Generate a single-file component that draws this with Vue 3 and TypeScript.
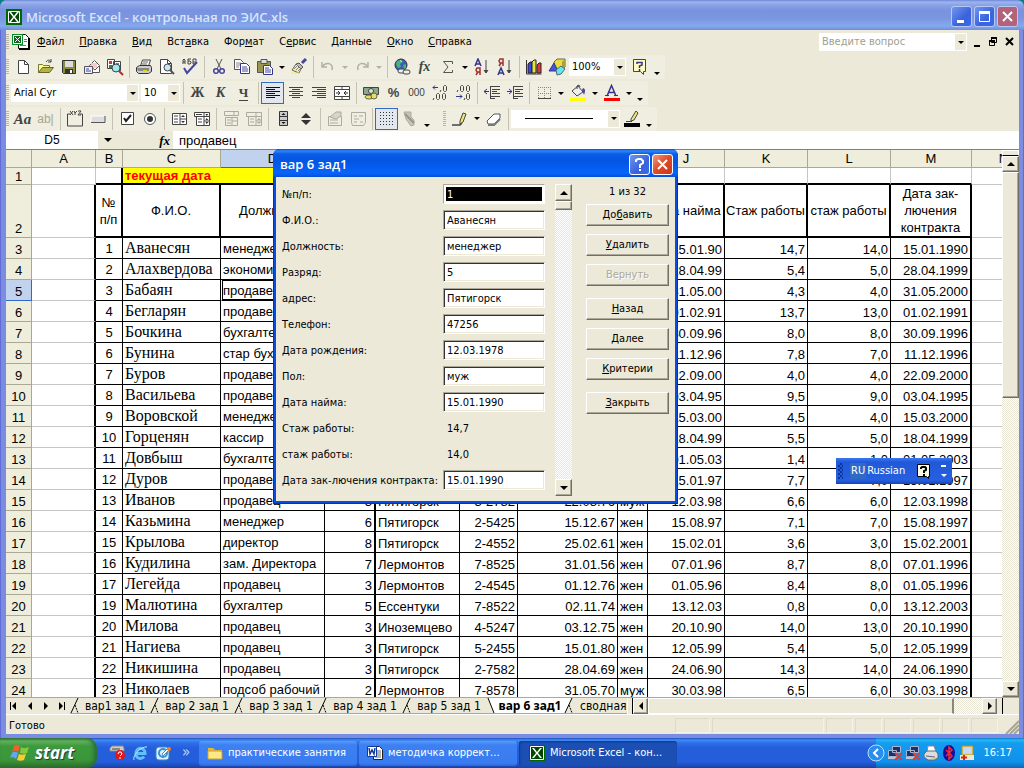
<script setup lang="ts">
import { ref } from 'vue'

type Item = { k: 'i' | 's' | 'a' | 'm'; icon?: string; label?: string; on?: boolean }

const icons: Record<string, string> = {
  new: '<path d="M4.500 2.500h6l4 4v9h-10z" fill="#fff" stroke="#444"/><path d="M10.500 2.500v4h4" fill="none" stroke="#444"/>',
  open: '<path d="M1.500 14.500v-8h4l1 1h6v3" fill="#ffff8c" stroke="#77773a"/><path d="M1.500 14.500l4-5h11l-4 5z" fill="#b5b24a" stroke="#66662c"/><path d="M9 4c2-3 4-2 5 0m0-3v3h-3" fill="none" stroke="#444"/>',
  save: '<path d="M2.500 2.500h13v13h-12l-1-1z" fill="#8c8c3c" stroke="#333"/><path d="M5 3h8v6H5z" fill="#ddd"/><path d="M5 11h8v4H5z" fill="#333"/><path d="M10 12h2v3h-2z" fill="#fff"/>',
  mail: '<path d="M6.500 7.500l5-5 5 5v7h-10z" fill="#fff" stroke="#555"/><path d="M8 5h6v5H8z" fill="#f9c8c8"/><path d="M7 8l5 4 4-4" fill="none" stroke="#555"/><path d="M1.500 8.500h8v7h-8z" fill="#eef" stroke="#555"/><path d="M3 11h3M3 13h5" stroke="#4646a0"/>',
  search: '<path d="M1.500 1.500h7v9h-7zM7.500 3.500h7v9h-7z" fill="#fff" stroke="#444"/><path d="M3 3h3v3H3z" fill="#d33"/><path d="M3 7h3v3H3z" fill="#338833"/><path d="M10 5h3v2h-3z" fill="#39c"/><circle cx="10" cy="10" r="4" fill="#9eeaf5" stroke="#444"/><path d="M13 13l4 4" stroke="#c22" stroke-width="2"/>',
  print: '<path d="M5.500 8l2-6h8l-2 6z" fill="#fff" stroke="#444"/><path d="M8 4h5M7 6h5" stroke="#666"/><path d="M1.500 9.500l3-2h11l1 2v4l-3 2h-10l-2-2z" fill="#ccc" stroke="#333"/><path d="M2 10h12v3H3z" fill="#888"/><path d="M8 13h4" stroke="#dd0" stroke-width="2"/>',
  preview: '<path d="M2.500 1.500h7l4 4v10h-11z" fill="#fff" stroke="#444"/><path d="M9.500 1.500v4h4" fill="none" stroke="#444"/><circle cx="9.500" cy="9.500" r="3.500" fill="#c4eaf5" stroke="#444"/><path d="M12 12l4 4" stroke="#555" stroke-width="2"/>',
  spell: '<path d="M2 6V2l1-1 1 1v4M2 4h2M7 1v5h2l1-1V4L9 3H7m3-2H7M12 1v5h3V4h-3m0-3h3v2" fill="none" stroke="#444"/><path d="M3 10l3 5 10-11" fill="none" stroke="#4646a0" stroke-width="2"/>',
  cut: '<path d="M6 1l5 10M12 1L7 11" stroke="#555" fill="none"/><circle cx="6" cy="13" r="2.300" fill="none" stroke="#4646a0" stroke-width="1.500"/><circle cx="12" cy="13" r="2.300" fill="none" stroke="#4646a0" stroke-width="1.500"/>',
  copy: '<path d="M1.500 1.500h6l3 3v7h-9z" fill="#fff" stroke="#555"/><path d="M3 5h5M3 7h5M3 9h3" stroke="#888"/><path d="M7.500 5.500h6l3 3v7h-9z" fill="#fff" stroke="#34348e"/><path d="M9 9h5M9 11h6M9 13h6" stroke="#4646a0"/>',
  paste: '<path d="M1.500 3.500h13v11h-13z" fill="#9a9650" stroke="#555"/><path d="M5 1.500h6v4H5z" fill="#ddd" stroke="#555"/><path d="M7.500 7.500h6l3 3v6h-9z" fill="#fff" stroke="#34348e"/><path d="M9 10h4M9 12h6M9 14h6" stroke="#4646a0"/>',
  brush: '<path d="M16 1l-4 4" stroke="#4646a0" stroke-width="3"/><path d="M9 5l4 4-2 2-5-5z" fill="#bbb" stroke="#555"/><path d="M6 6l5 5-2 4-7-3z" fill="#f0edb0" stroke="#666"/><path d="M4 11l4-4M6 12l3-3M8 13l2-2" stroke="#888"/><path d="M1 15h9" stroke="#f4ee30" stroke-dasharray="2 1"/>',
  undo: '<path d="M3 4v5h5M3 9c4-6 12-4 10 3" fill="none" stroke="#b4b1a0" stroke-width="1.500"/>',
  redo: '<path d="M15 4v5h-5M15 9c-4-6-12-4-10 3" fill="none" stroke="#b4b1a0" stroke-width="1.500"/>',
  globe: '<circle cx="8" cy="7" r="6" fill="#4157c8" stroke="#333"/><path d="M4 3l4-1 2 2-3 2 1 3-3 1-2-4zM10 7l3-1v4l-2 1z" fill="#46b867"/><path d="M7 2l2 1-1 1z" fill="#fff"/><rect x="5" y="11" width="7" height="4" rx="2" fill="#eee" stroke="#444"/><rect x="10" y="12" width="7" height="4" rx="2" fill="#eee" stroke="#444"/>',
  sum: '<path d="M13.500 6V3.500H4.500L9 9l-4.500 5.500h9V12" fill="none" stroke="#555"/>',
  az: '<path d="M2 8l3-7 3 7M3 6h4" stroke="#34348e" fill="none" stroke-width="1.500"/><path d="M7 17v-7H4l-1 2 1 2h3M5 14l-2 3" stroke="#a03030" fill="none" stroke-width="1.500"/><path d="M13 2v13M11 12l2 3 2-3" stroke="#444" fill="#444"/>',
  za: '<path d="M2 17l3-7 3 7M3 15h4" stroke="#34348e" fill="none" stroke-width="1.500"/><path d="M7 8V1H4L3 3l1 2h3M5 5L3 8" stroke="#a03030" fill="none" stroke-width="1.500"/><path d="M13 2v13M11 12l2 3 2-3" stroke="#444" fill="#444"/>',
  chart: '<path d="M1.500 2v14h15" fill="none" stroke="#333"/><path d="M3 6l2-2h2v11H3z" fill="#3a48e0" stroke="#222"/><path d="M7 4l2-2h2v13H7z" fill="#e8e23a" stroke="#222"/><path d="M12 7l2-2h2v10h-4z" fill="#d83a3a" stroke="#222"/>',
  draw: '<path d="M6 4l3-3h8v8l-3 3H6z" fill="#e9df3c" stroke="#666"/><path d="M14 4l3-3v8l-3 3z" fill="#a8a040"/><path d="M1 13l5-8 4 8z" fill="#4157d8" stroke="#34348e"/><path d="M8 12l5-4 4 3-4 5-4 1z" fill="#61e9ee" stroke="#567"/>',
  help: '<path d="M2.500 1.500h12v12h-2v3l-3-3h-7z" fill="#fffcc0" stroke="#444"/><path d="M6 6V4.500h5V7L8.500 8v2M8.500 11v2" stroke="#34348e" stroke-width="1.500" fill="none"/>',
  left: '<path d="M2 3.500h14M2 5.500h9M2 7.500h14M2 9.500h9M2 11.500h14M2 13.500h9" stroke="#111"/>',
  center: '<path d="M2 3.500h14M5 5.500h8M2 7.500h14M5 9.500h8M2 11.500h14M5 13.500h8" stroke="#444"/>',
  right: '<path d="M2 3.500h14M7 5.500h9M2 7.500h14M7 9.500h9M2 11.500h14M7 13.500h9" stroke="#444"/>',
  merge: '<path d="M1.500 2.500h15v13h-15zM1.500 5.500h15M1.500 12.500h15M9 2v3M9 12v4" fill="#fff" stroke="#444"/><path d="M3 9h3M15 9h-3M5 7l2 2-2 2M13 7l-2 2 2 2" stroke="#333" fill="none"/>',
  money: '<path d="M1.500 3.500h15v7h-15z" fill="#88a888" stroke="#444"/><circle cx="9" cy="7" r="2.500" fill="#d8e8d8" stroke="#444"/><ellipse cx="7" cy="13" rx="4" ry="2" fill="#e8de58" stroke="#665"/><ellipse cx="12" cy="12" rx="3" ry="3" fill="#e8de58" stroke="#665"/>',
  inc: '<path d="M7 3.500H2M4 1.500l-2 2 2 2" stroke="#34348e" fill="none"/><path d="M10 6l-1 2M12.500 2.500l1-1h1l1 1v4l-1 1h-1l-1-1zM3 14l-1 2M5.500 10.500l1-1h1l1 1v4l-1 1h-1l-1-1zM11.500 10.500l1-1h1l1 1v4l-1 1h-1l-1-1z" fill="none" stroke="#444"/>',
  dec: '<path d="M2 12.500h6M6 10.500l2 2-2 2" stroke="#34348e" fill="none"/><path d="M4 6L3 8M6.500 2.500l1-1h1l1 1v4l-1 1h-1l-1-1zM12.500 2.500l1-1h1l1 1v4l-1 1h-1l-1-1zM11 14l-1 2M12.500 10.500l1-1h1l1 1v4l-1 1h-1l-1-1z" fill="none" stroke="#444"/>',
  outdent: '<path d="M7 2.500h10M9 5.500h8M9 7.500h5M9 9.500h8M7 12.500h10M7 14.500h5M7.500 2v13" stroke="#444"/><path d="M6 7.500H1M4 5l-3 2.500L4 10" stroke="#34348e" fill="none"/>',
  indent: '<path d="M7 2.500h10M9 5.500h8M9 7.500h5M9 9.500h8M7 12.500h10M7 14.500h5M7.500 2v13" stroke="#444"/><path d="M1 7.500h5M3 5l3 2.500L3 10" stroke="#34348e" fill="none"/>',
  border: '<path d="M3.500 3v11M9.500 3v11M15.500 3v11M3 3.500h12M3 9.500h12" stroke="#888" stroke-dasharray="1 1"/><path d="M3 14.500h13" stroke="#444"/>',
  fill: '<path d="M3 7l6-5 5 6-6 4z" fill="#eee" stroke="#444"/><path d="M8 5V2l2-1 1 2" fill="none" stroke="#444"/><path d="M14 4c3 1 2 4 1 7l-2-5z" fill="#4646a0"/><path d="M1 14h16v3H1z" fill="#ff0"/>',
  color: '<path d="M4 12L8.500 1.500 13 12M6 8.500h6" stroke="#34348e" fill="none" stroke-width="1.500"/><path d="M2 11.500h4M11 11.500h4" stroke="#34348e"/><path d="M1 14h16v3H1z" fill="#f00"/>',
  group: '<path d="M4 4H1.500v12h15V4H14" fill="none" stroke="#444"/><path d="M4 1l3 4M7 1L4 5M8 1l1 2 2-2M9 3v2M12 1h3l-3 4h3" fill="none" stroke="#444"/>',
  button: '<path d="M2 6h14v6H2z" fill="#ddd"/><path d="M2 12.500h14V6" fill="none" stroke="#555"/><path d="M2 12V6h13" fill="none" stroke="#fff"/>',
  check: '<path d="M3.500 2.500h12v12h-12z" fill="#fff" stroke="#444"/><path d="M6 8l2 3 5-6" fill="none" stroke="#222" stroke-width="2"/>',
  radio: '<circle cx="9" cy="9" r="5.500" fill="#fff" stroke="#555"/><circle cx="9" cy="9" r="3" fill="#333"/>',
  list: '<path d="M2.500 3.500h14v11h-14zM10 4v11M10 9h6" fill="#fff" stroke="#444"/><path d="M4 6h4M4 9h4M4 12h4" stroke="#444"/><path d="M13 5l-2 2h4zM13 13l-2-2h4z" fill="#333"/>',
  combo: '<path d="M1.500 2.500h15v4h-15zM3.500 6.500h13v9h-13zM11 3v12M11 11h5" fill="#fff" stroke="#444"/><path d="M5 9h4M5 12h4M3 4.500h6" stroke="#444"/><path d="M13.500 6l-1-2h3zM13.500 8l-1 2h3zM13.500 14l-1-2h3z" fill="#333"/>',
  dlist: '<path d="M2.500 1.500h14v4h-14zM3.500 7.500h12v8h-12zM10 8v7M10 11h5M12 2v3" fill="none" stroke="#aeab9b"/><path d="M5 10h4M5 13h4" stroke="#aeab9b"/>',
  dcombo: '<path d="M1.500 2.500h15v4h-15zM3.500 6.500h13v9h-13zM11 3v12M11 11h5" fill="none" stroke="#aeab9b"/><path d="M5 9h4M5 12h4" stroke="#aeab9b"/><path d="M14 8l-2 2h4zM14 14l-2-2h4z" fill="#aeab9b"/>',
  scroll: '<path d="M5.500 1.500h8v5h-8zM5.500 6.500h8v4h-8zM5.500 10.500h8v5h-8z" fill="#ccc" stroke="#333"/><path d="M9.500 3l-2 2h4zM9.500 14l-2-2h4z" fill="#111"/>',
  spin: '<path d="M9 3l5 5H4zM9 15l5-5H4z" fill="#333"/>',
  props: '<path d="M2.500 6.500h13v9h-13zM4 10h8M4 13h8" fill="none" stroke="#aeab9b"/><path d="M4 7l6-5h5v4l-5 3z" fill="#d8d5c4" stroke="#aeab9b"/>',
  code: '<path d="M2.500 2.500h14v10l-2 3h-11l-1-3zM5 6h3M10 6h4M5 9h5M5 12h3M11 12h3" fill="none" stroke="#aeab9b"/>',
  grid: '<path d="M2 2.500h15M2 5.500h15M2 8.500h15M2 11.500h15M2 14.500h15" stroke="#333" stroke-dasharray="1 2"/>',
  run: '<path d="M3 2h7v5l3 3v5l-3 1-5-7z" fill="#c8c5b4" stroke="#aeab9b"/><path d="M4 4l9 9" stroke="#999685" stroke-width="2"/>',
  pen: '<path d="M1 15h8l2-2" fill="none" stroke="#444" stroke-width="1.500"/><path d="M9 11l3-8 3 1-3 8-3 2z" fill="#eee87c" stroke="#444"/>',
  eraser: '<path d="M2 11l7-7h6v4l-6 6H3z" fill="#fff" stroke="#555"/><path d="M3 15h6l6-6" fill="none" stroke="#777" stroke-width="2"/>',
  pencolor: '<path d="M3 11.500h6" stroke="#444"/><path d="M8 9l5-8 2 2-4 7-3 1z" fill="#eee87c" stroke="#444"/><path d="M1 13h16v4H1z" fill="#000"/>',
}
const glyph: Record<string, { t: string; c: string }> = {
  fx: { t: 'fx', c: 'g-fx' },
  bold: { t: 'Ж', c: 'g-b' },
  italic: { t: 'К', c: 'g-i' },
  under: { t: 'Ч', c: 'g-u' },
  percent: { t: '%', c: 'g-p' },
  zeros: { t: '000', c: 'g-z' },
  label: { t: 'Aa', c: 'g-l' },
  edit: { t: 'ab|', c: 'g-e' },
}
// Compact notation: "|" separator, "v" drop arrow, "^" overflow arrow, "*" prefix marks a pressed button
const bar = (spec: string): Item[] =>
  spec.split(' ').map((w) =>
    w === '|' ? { k: 's' } : w === 'v' ? { k: 'a' } : w === '^' ? { k: 'm' } : { k: 'i', icon: w.replace('*', ''), on: w[0] === '*' },
  )
const groups = [
  [bar('new open save mail search | print preview spell | cut copy paste v brush | undo v redo v | globe fx sum v az za | chart draw'), bar('help ^')],
  [bar('| bold italic under | *left center right merge | money percent zeros inc dec | outdent indent | border v fill v color v ^')],
  [bar('label edit | group button | check radio | list combo | dlist dcombo | scroll spin | props code | *grid run ^'), bar('pen v eraser |'), bar('pencolor ^')],
]
type Seg = { kind: 'items'; items: Item[] } | { kind: 'combo'; cls: string; label: string; value: string } | { kind: 'grip' }
const bars: Seg[][] = [
  [{ kind: 'items', items: groups[0][0] }, { kind: 'combo', cls: 'c-zoom', label: 'Масштаб', value: '100%' }, { kind: 'items', items: groups[0][1] }],
  [{ kind: 'combo', cls: 'c-font', label: 'Шрифт', value: 'Arial Cyr' }, { kind: 'combo', cls: 'c-size', label: 'Размер', value: '10' }, { kind: 'items', items: groups[1][0] }],
  [{ kind: 'items', items: groups[2][0] }, { kind: 'grip' }, { kind: 'items', items: groups[2][1] }, { kind: 'combo', cls: 'c-line', label: 'Вид линии', value: '' }, { kind: 'items', items: groups[2][2] }],
]
const menu = [['', 'Ф', 'айл'], ['', 'П', 'равка'], ['', 'В', 'ид'], ['Вст', 'а', 'вка'], ['Фор', 'м', 'ат'], ['С', 'е', 'рвис'], ['', 'Д', 'анные'], ['', 'О', 'кно'], ['', 'С', 'правка']]

const cols = 'ABCDEFGHIJKLMN'.split('')
const raw = `1;Аванесян;менеджер;;;;;;15.01.90;14,7;14,0;15.01.1990
2;Алахвердова;экономист;;;;;;28.04.99;5,4;5,0;28.04.1999
3;Бабаян;продавец;;;;;;31.05.00;4,3;4,0;31.05.2000
4;Бегларян;продавец;;;;;;01.02.91;13,7;13,0;01.02.1991
5;Бочкина;бухгалтер;;;;;;30.09.96;8,0;8,0;30.09.1996
6;Бунина;стар бухгалтер;;;;;;11.12.96;7,8;7,0;11.12.1996
7;Буров;продавец;;;;;;22.09.00;4,0;4,0;22.09.2000
8;Васильева;продавец;;;;;;03.04.95;9,5;9,0;03.04.1995
9;Воровской;менеджер;;;;;;15.03.00;4,5;4,0;15.03.2000
10;Горценян;кассир;;;;;;18.04.99;5,5;5,0;18.04.1999
11;Довбыш;бухгалтер;;;;;;01.05.03;1,4;1,0;01.05.2003
12;Дуров;продавец;;;;;;15.01.97;7,7;7,0;15.01.1997
13;Иванов;продавец;3;Пятигорск;3-2782;22.08.76;муж;12.03.98;6,6;6,0;12.03.1998
14;Казьмина;менеджер;6;Пятигорск;2-5425;15.12.67;жен;15.08.97;7,1;7,0;15.08.1997
15;Крылова;директор;8;Пятигорск;2-4552;25.02.61;жен;15.02.01;3,6;3,0;15.02.2001
16;Кудилина;зам. Директора;7;Лермонтов;7-8525;31.01.56;жен;07.01.96;8,7;8,0;07.01.1996
17;Легейда;продавец;3;Лермонтов;2-4545;01.12.76;жен;01.05.96;8,4;8,0;01.05.1996
19;Малютина;бухгалтер;5;Ессентуки;7-8522;02.11.74;жен;13.12.03;0,8;0,0;13.12.2003
20;Милова;продавец;3;Иноземцево;4-5247;03.12.75;жен;20.10.90;14,0;13,0;20.10.1990
21;Нагиева;продавец;3;Пятигорск;5-2455;15.01.80;жен;12.05.99;5,4;5,0;12.05.1999
22;Никишина;продавец;3;Пятигорск;2-7582;28.04.69;жен;24.06.90;14,3;14,0;24.06.1990
23;Николаев;подсоб рабочий;2;Лермонтов;7-8578;31.05.70;муж;30.03.98;6,5;6,0;30.03.1998`
const rows = raw.split('\n').map((l) => l.split(';'))
const heads = ['№ п/п', 'Ф.И.О.', 'Должность', '', '', '', '', '', 'Дата найма', 'Стаж работы', 'стаж работы', 'Дата зак-лючения контракта']

const fields = ref([
  { l: '№п/п:', v: '1', ro: false },
  { l: 'Ф.И.О.:', v: 'Аванесян', ro: false },
  { l: 'Должность:', v: 'менеджер', ro: false },
  { l: 'Разряд:', v: '5', ro: false },
  { l: 'адрес:', v: 'Пятигорск', ro: false },
  { l: 'Телефон:', v: '47256', ro: false },
  { l: 'Дата рождения:', v: '12.03.1978', ro: false },
  { l: 'Пол:', v: 'муж', ro: false },
  { l: 'Дата найма:', v: '15.01.1990', ro: false },
  { l: 'Стаж работы:', v: '14,7', ro: true },
  { l: 'стаж работы:', v: '14,0', ro: true },
  { l: 'Дата зак-лючения контракта:', v: '15.01.1990', ro: false },
])
const dlgButtons = [
  [['До', 'б', 'авить'], ['', 'У', 'далить'], ['Вернуть', '', '']],
  [['', 'Н', 'азад'], ['', 'Д', 'алее'], ['', 'К', 'ритерии']],
  [['', 'З', 'акрыть']],
]
const tabs = ['вар1 зад 1', 'вар 2 зад 1', 'вар 3 зад 1', 'вар 4 зад 1', 'вар 5 зад 1', 'вар 6 зад1', 'сводная']
const formula = ref('продавец')
const question = ref('')
</script>

<template>
  <div class="desktop">
    <main class="window">
      <header class="titlebar">
        <svg class="xl" viewBox="0 0 16 16"><path d="M0 0h16v16H0z" fill="#006800" /><path d="M2.500 2.500h11v11h-11z" fill="#004800" stroke="#fff" /><path d="M3 3h2l3 4 3-4h2L9 8l4 5h-2L8 9l-3 4H3l4-5z" fill="#fff" /></svg>
        <h1>Microsoft Excel - контрольная по ЭИС.xls</h1>
        <button class="wb" aria-label="Свернуть"><svg viewBox="0 0 19 19"><path d="M5 13h7v3H5z" fill="#fff" /></svg></button>
        <button class="wb" aria-label="Развернуть"><svg viewBox="0 0 19 19"><path d="M4.500 5.500h10v9h-10z" fill="none" stroke="#fff" /><path d="M4 4h11v3H4z" fill="#fff" /></svg></button>
        <button class="wb red" aria-label="Закрыть окно"><svg viewBox="0 0 19 19"><path d="M5 5l9 9M14 5l-9 9" stroke="#fff" stroke-width="2" /></svg></button>
      </header>

      <nav class="menubar">
        <i class="grip"></i>
        <svg class="docicon" viewBox="0 0 18 18"><path d="M6.500 1.500h7l3 3v11h-10z" fill="#fff" stroke="#111" /><path d="M17 5v11H7" fill="none" stroke="#000" stroke-width="2" /><path d="M8 12.500h6M12 6.500h3M12 8.500h3" stroke="#777" /><path d="M0 1h11v11H0z" fill="#0a8a2a" /><path d="M1.500 2.500h8v8h-8z" fill="#0a6a1a" stroke="#fff" /><path d="M3 4l5 5M8 4L3 9" stroke="#fff" /></svg>
        <button v-for="m in menu" :key="m.join('')" class="mi">{{ m[0] }}<u>{{ m[1] }}</u>{{ m[2] }}</button>
        <span class="fill"></span>
        <label class="ask"><input v-model="question" aria-label="Введите вопрос" placeholder="Введите вопрос" /><i class="tri"></i></label>
        <button class="mdi" aria-label="Свернуть книгу"><svg viewBox="0 0 12 12"><path d="M3 9h6v2H3z" /></svg></button>
        <button class="mdi" aria-label="Восстановить книгу"><svg viewBox="0 0 12 12"><path d="M4.500 2.500h5v4h-5zM2.500 5.500h5v4h-5z" fill="#ece9d8" stroke="#000" /><path d="M4 1h6v2H4zM2 4h6v2H2z" /></svg></button>
        <button class="mdi" aria-label="Закрыть книгу"><svg viewBox="0 0 12 12"><path d="M3 2l7 7M10 2L3 9" stroke="#000" stroke-width="2" /></svg></button>
      </nav>

      <div v-for="(segs, r) in bars" :key="r" class="toolrow">
        <div class="toolbar">
          <i class="grip"></i>
          <template v-for="(s, n) in segs" :key="n">
            <i v-if="s.kind === 'grip'" class="grip second"></i>
            <label v-else-if="s.kind === 'combo'" class="combo" :class="s.cls">
              <select :aria-label="s.label"><option>{{ s.value }}</option></select>
              <i v-if="s.cls === 'c-line'" class="line"></i>
              <i class="tri"></i>
            </label>
            <template v-else>
              <template v-for="(t, i) in s.items" :key="i">
                <i v-if="t.k === 's'" class="sep"></i>
                <button v-else-if="t.k === 'a' || t.k === 'm'" class="drop" :class="{ more: t.k === 'm', dim: r === 0 && (i === 17 || i === 19) }" aria-label="Параметры"><i></i></button>
                <button v-else class="tb" :class="{ on: t.on }" :aria-label="t.icon">
                  <span v-if="glyph[t.icon!]" :class="glyph[t.icon!].c">{{ glyph[t.icon!].t }}</span>
                  <svg v-else viewBox="0 0 18 18" v-html="icons[t.icon!]"></svg>
                </button>
              </template>
            </template>
          </template>
        </div>
      </div>

      <div class="formula">
        <div class="namebox">D5</div>
        <button class="nbdrop" aria-label="Имена"><i></i></button>
        <button class="fxb" aria-label="Вставка функции">fx</button>
        <input v-model="formula" aria-label="Строка формул" />
      </div>

      <section class="sheet">
        <div class="cells">
          <table>
            <colgroup><col class="w-h" /><col v-for="c in cols" :key="c" :class="'w-' + c" /></colgroup>
            <thead>
              <tr class="letters"><th></th><th v-for="c in cols" :key="c" scope="col" :class="{ sel: c === 'D' }">{{ c }}</th></tr>
            </thead>
            <tbody>
              <tr class="r1">
                <th scope="row">1</th><td class="plain"></td><td class="kb"></td>
                <td class="yel">текущая дата</td><td class="yel"></td><td class="yel"></td>
                <td v-for="n in 7" :key="n" class="ub"></td><td class="ub"></td><td class="plain"></td>
              </tr>
              <tr class="r2">
                <th scope="row">2</th><td class="plain edge"></td>
                <td v-for="(h, n) in heads" :key="n" class="hd">{{ h }}</td><td class="plain"></td>
              </tr>
              <tr v-for="(row, i) in rows" :key="i" class="data">
                <th scope="row" :class="{ sel: i === 2 }">{{ i + 3 }}</th><td class="plain edge"></td>
                <td v-for="(v, j) in row" :key="j" :class="['k' + j, { active: i === 2 && j === 2 }]">{{ v }}</td><td class="plain"></td>
              </tr>
            </tbody>
          </table>
        </div>
        <div class="vscroll">
          <i class="split"></i>
          <button class="sb" aria-label="Вверх"><i class="up"></i></button>
          <i class="thumb"></i>
          <i class="fill"></i>
          <button class="sb" aria-label="Вниз"><i class="down"></i></button>
        </div>
      </section>

      <div class="tabrow">
        <button class="nav" aria-label="Первый лист"><svg viewBox="0 0 16 16"><path d="M4 4h1v8H4zM10 4v8L6 8z" /></svg></button>
        <button class="nav" aria-label="Предыдущий лист"><svg viewBox="0 0 16 16"><path d="M10 4v8L6 8z" /></svg></button>
        <button class="nav" aria-label="Следующий лист"><svg viewBox="0 0 16 16"><path d="M6 4v8l4-4z" /></svg></button>
        <button class="nav" aria-label="Последний лист"><svg viewBox="0 0 16 16"><path d="M5 4v8l4-4zM10 4h1v8h-1z" /></svg></button>
        <div class="tabs">
          <template v-for="(t, i) in tabs" :key="t">
            <svg class="slant" viewBox="0 0 10 17">
              <path v-if="i === 5" d="M2 0h8v17H8z" fill="#fff" /><path v-if="i === 6" d="M0 0h8L1 16H0z" fill="#fff" />
              <path v-if="i !== 5" d="M8 0L1 15" stroke="#000" fill="none" />
              <path :d="i === 5 ? 'M2 0l6 15' : 'M5 7l3 8'" stroke="#000" :stroke-dasharray="i === 5 ? 'none' : '2 1'" fill="none" />
            </svg>
            <button class="tab" :class="{ cur: i === 5, first: i === 0, last: i === 6 }">{{ t }}</button>
          </template>
        </div>
        <i class="tsplit"></i>
        <button class="sb" aria-label="Влево"><i class="lf"></i></button>
        <i class="hthumb"></i><i class="htrack"></i>
        <button class="sb" aria-label="Вправо"><i class="rt"></i></button>
        <i class="hend"></i>
      </div>

      <footer class="status">
        <span class="ready">Готово</span>
        <i class="p1"></i><i class="p2"></i><i v-for="n in 6" :key="n" class="p3"></i>
        <svg viewBox="0 0 14 14"><path d="M1 14L14 1M5 14l9-9M9 14l5-5" stroke="#a8a595" stroke-width="2" /></svg>
      </footer>
    </main>

    <section class="dialog" role="dialog" aria-label="вар 6 зад1">
      <header>
        <h2>вар 6 зад1</h2>
        <button class="wb" aria-label="Справка"><svg viewBox="0 0 19 19"><path d="M6 7V5l2-1h3l2 2v2l-3 2v3M10 14v2" fill="none" stroke="#fff" stroke-width="2" /></svg></button>
        <button class="wb red" aria-label="Закрыть форму"><svg viewBox="0 0 19 19"><path d="M5 5l9 9M14 5l-9 9" stroke="#fff" stroke-width="2" /></svg></button>
      </header>
      <div class="dbody">
        <div class="form">
          <template v-for="(f, i) in fields" :key="f.l">
            <label :for="'f' + i">{{ f.l }}</label>
            <output v-if="f.ro" :id="'f' + i">{{ f.v }}</output>
            <input v-else :id="'f' + i" v-model="f.v" :class="{ marked: i === 0 }" />
          </template>
        </div>
        <div class="dscroll">
          <button class="sb" aria-label="Предыдущая запись"><i class="up"></i></button>
          <i class="thumb"></i><i class="fill"></i>
          <button class="sb" aria-label="Следующая запись"><i class="down"></i></button>
        </div>
        <div class="acts">
          <p>1 из 32</p>
          <div v-for="(g, i) in dlgButtons" :key="i" class="grp">
            <button v-for="b in g" :key="b.join('')" :disabled="!b[1]">{{ b[0] }}<u>{{ b[1] }}</u>{{ b[2] }}</button>
          </div>
        </div>
      </div>
    </section>

    <aside class="lang">
      <i class="lgrip"></i><span class="ru">RU</span><span>Russian</span>
      <button aria-label="Справка по языку"><svg viewBox="0 0 15 16"><path d="M1.500 1.500h12v12h-1v2l-2-2h-9z" fill="#fffde0" stroke="#000" /><path d="M5 6V5l1-1h3l1 1v2L8 8v2M8 11v2" fill="none" stroke="#000" stroke-width="2" /></svg></button>
      <span class="lend"><i></i><i class="t"></i></span>
    </aside>

    <footer class="taskbar">
      <button class="start">
        <svg viewBox="0 0 20 18"><path d="M4 2c2-2 4-1 6 0L8 8C6 7 4 6 2 8z" fill="#f0602a" /><path d="M11 3c3 2 5 1 8 0l-2 6c-2 1-4 1-7 0z" fill="#84c83c" /><path d="M2 9c2-2 4-1 6 0l-2 6c-2-2-4-2-6-1z" fill="#6aa2f8" /><path d="M9 10c2 1 4 1 7 0l-2 6c-2 1-5 1-7 0z" fill="#f8cc38" /></svg>
        <span>start</span>
      </button>
      <div class="quick">
        <button aria-label="Диск"><svg viewBox="0 0 16 16"><path d="M1 3l2-2h11l1 2v3H1z" fill="#ccc" stroke="#888" /><path d="M3 4h8" stroke="#444" /><circle cx="11" cy="10" r="5" fill="#e01818" /><path d="M9 9l1-2h2l1 2-2 2M11 12v2" stroke="#fff" fill="none" stroke-width="1" /></svg></button>
        <button aria-label="Internet Explorer"><svg viewBox="0 0 16 16"><path d="M4 8.500h9c0-7-9-7-9 0 0 6 6 6 8 3" fill="none" stroke="#5fc0fa" stroke-width="3" /><path d="M2 15C0 11 9 1 15 2" fill="none" stroke="#b8e4ff" /></svg></button>
        <button aria-label="Outlook Express"><svg viewBox="0 0 16 16"><rect x="1" y="2" width="13" height="13" rx="3" fill="#dff0fa" stroke="#3a86c0" /><circle cx="8" cy="8" r="4" fill="none" stroke="#3393d8" stroke-width="2" /><path d="M7 9l7-7 1 2-7 7z" fill="#fff" stroke="#58a" /><circle cx="14" cy="4" r="2" fill="#f08028" /></svg></button>
        <button class="chev" aria-label="Ещё">»</button>
      </div>
      <button class="task"><svg viewBox="0 0 16 16"><path d="M1 3h5l2 2h7v9H1z" fill="#e4b83c" /><path d="M1 14V6h12l2 1v7z" fill="#fbe888" stroke="#d0a030" /></svg><span>практические занятия</span></button>
      <button class="task"><svg viewBox="0 0 16 16"><path d="M6.500 1.500h6l3 3v10h-9z" fill="#fff" stroke="#222" /><path d="M8 6h6M8 8h6M8 10h6M8 12h6" stroke="#666" /><path d="M.500 1.500h9v10h-9z" fill="#fff" stroke="#123a9c" /><path d="M2 3l1 6 2-4 2 4 1-6" fill="none" stroke="#123a9c" stroke-width="1.500" /></svg><span>методичка коррект...</span></button>
      <button class="task cur"><svg viewBox="0 0 16 16"><path d="M0 0h16v16H0z" fill="#006800" /><path d="M1.500 1.500h13v13h-13z" fill="#004800" stroke="#fff" /><path d="M3 3h2l3 4 3-4h2L9 8l4 5h-2L8 9l-3 4H3l4-5z" fill="#fff" /></svg><span>Microsoft Excel - кон...</span></button>
      <span class="fill"></span>
      <div class="tray">
        <button class="hide" aria-label="Скрыть значки"><svg viewBox="0 0 18 18"><circle cx="9" cy="9" r="8" fill="#2a8ef0" stroke="#b8e0ff" /><path d="M11 5L7 9l4 4" stroke="#fff" stroke-width="2" fill="none" /></svg></button>
        <svg v-for="n in 2" :key="n" viewBox="0 0 16 16"><path d="M5.500 1.500h8v6h-8zM1.500 5.500h8v6h-8z" fill="#1c3070" stroke="#a8b4cc" /><path d="M1 12h9v2H1z" fill="#c0c4d0" /><path d="M8 8l7 7M15 8l-7 7" stroke="#f03428" stroke-width="2" /></svg>
        <svg viewBox="0 0 16 16"><path d="M4 7l1-6h6l2 6z" fill="#fff" stroke="#889" /><path d="M1 9l3-3h9l2 3v4l-4 2H5l-4-3z" fill="#ddd" stroke="#667" /><path d="M3 11l9 1" stroke="#667" /><path d="M8 14h4" stroke="#c8c838" /></svg>
        <svg viewBox="0 0 16 16"><ellipse cx="8" cy="8" rx="6" ry="8" fill="#1010a0" /><path d="M5 5l6 6-3 3V2l3 3-6 6" fill="none" stroke="#ff2828" stroke-width="1.500" /></svg>
        <svg viewBox="0 0 16 16"><path d="M3 1h11v9H3z" fill="#f0d860" stroke="#a89030" /><path d="M5 3h7v5H5z" fill="#c8d8f8" /><path d="M1 10h14v5H1z" fill="#f0e8c8" /><path d="M2 12.500h6M5 10v5" stroke="#e02020" stroke-width="2" /></svg>
        <time>16:17</time>
      </div>
    </footer>
  </div>
</template>

<style>
html, body { margin: 0; height: 100%; background: #008080; }
#app { height: 100%; }
</style>

<style scoped>
* { box-sizing: border-box; }
.desktop {
  --ui: Tahoma, "DejaVu Sans Condensed", "Noto Sans", sans-serif;
  position: relative; display: flex; flex-direction: column; height: 100vh; overflow: hidden;
  font: 11px/14px var(--ui); color: #000;
}
button, input, select { font: inherit; color: inherit; margin: 0; padding: 0; border: 0; background: none; border-radius: 0; outline: 0; }
i { display: block; font-style: normal; flex: none; }
svg { display: block; flex: none; }
button { display: flex; align-items: center; justify-content: center; flex: none; }
.fill { flex: 1; }
.window { flex: 1; min-height: 0; display: flex; flex-direction: column; padding: 0 5px 4px 6px; background: #7a8de0; border-radius: 7px 7px 0 0; box-shadow: inset 1px 0 #5f6cd6, inset -1px 0 #5f6cd6; overflow: hidden; }

.titlebar { height: 30px; margin: 0 -5px 0 -6px; padding: 3px 6px 0 6px; display: flex; align-items: center; gap: 2px; background: linear-gradient(#6f86d9 0, #9db5ee 2px, #8aa3e6 5px, #7a93df 10px, #7a95e1 18px, #84a9ec 26px, #6f8ddc 30px); }
.xl { width: 16px; height: 16px; }
h1, h2 { margin: 0; flex: 1; font: 600 13px/16px "Open Sans", "Noto Sans", sans-serif; color: #d8e4fb; padding-left: 2px; white-space: nowrap; }
.wb { width: 21px; height: 21px; border: 1px solid #fff; border-radius: 3px; background: linear-gradient(135deg, #6f97f0, #3a62dc 60%, #3a6ae8); }
.titlebar .wb { border-color: #b8c8f4; }
.wb svg { width: 19px; height: 19px; }
.wb.red { background: linear-gradient(135deg, #ef9a80, #dd4a26 50%, #c8381a); }
.titlebar .wb.red { background: #b4617a; }

.menubar { height: 24px; background: #ece9d8; display: flex; align-items: center; flex: none; padding-right: 2px; }
.grip { width: 3px; height: 16px; background: repeating-linear-gradient(#b9b6a4 0 1px, transparent 1px 2px); }
.docicon { width: 18px; height: 18px; margin: 0 1px 0 3px; }
.mi { height: 20px; padding: 0 8px 0 7px; display: block; white-space: nowrap; }
.mi:first-of-type { padding-left: 6px; }
.ask { display: flex; align-items: center; width: 148px; height: 18px; background: #fff; margin-right: 2px; padding: 1px; }
.ask input { flex: 1; min-width: 0; padding-left: 2px; }
.ask input::placeholder { color: #a09e90; opacity: 1; }
.tri { width: 11px; height: 100%; background: #ece9d8; display: flex; align-items: center; justify-content: center; }
.tri::after { content: ""; border: 3px solid transparent; border-top-color: #000; border-bottom: 0; }
.mdi { width: 16px; height: 16px; }
.mdi svg { width: 12px; height: 12px; }

.toolrow { height: 26px; background: #ece9d8; flex: none; display: flex; align-items: center; }
.toolrow:nth-last-of-type(3) { height: 25px; }
.toolbar { display: flex; align-items: center; height: 24px; background: #efeee0; border-radius: 3px; padding-right: 3px; }
.toolbar > .grip { margin-right: 2px; }
.toolbar > .grip.second { margin-left: 11px; }
.tb { width: 23px; height: 22px; border: 1px solid transparent; }
.tb svg { width: 18px; height: 18px; }
.tb.on { border-color: #316ac5; background: #e1e6ef; }
.sep { width: 6px; height: 22px; background: linear-gradient(#c5c2b2, #c5c2b2) 3px 0 / 1px 100% no-repeat; }
.drop { width: 11px; height: 22px; }
.drop i { border: 3px solid transparent; border-top-color: #000; border-bottom: 0; }
.drop.more { align-items: flex-end; padding-bottom: 3px; }
.drop.dim i { border-top-color: #b4b1a0; }
.combo { position: relative; display: flex; height: 18px; background: #fff; padding: 1px; align-items: center; }
.combo select { flex: 1; min-width: 0; appearance: none; padding-left: 2px; height: 16px; }
.c-font { width: 128px; margin-right: 2px; }
.c-size { width: 39px; }
.c-zoom { width: 57px; margin-right: 2px; margin-left: 1px; }
.c-line { width: 109px; }
.c-line .line { position: absolute; left: 14px; right: 27px; top: 8px; height: 1px; background: #000; }
.g-fx { font: italic bold 14px/18px "Liberation Serif", serif; color: #444; }
.g-b { font: bold 14px/18px "Liberation Serif", serif; color: #444; }
.g-i { font: italic bold 14px/18px "Liberation Serif", serif; color: #444; }
.g-u { font: bold 13px/14px "Liberation Serif", serif; color: #444; border-bottom: 1px solid #444; }
.g-p { font: bold 13px/18px "Liberation Sans", sans-serif; color: #444; }
.g-z { font: 10px/18px "Liberation Sans", sans-serif; color: #444; }
.g-l { font: italic bold 15px/18px "Liberation Serif", serif; color: #444; }
.g-e { font: 12px/18px "Liberation Sans", sans-serif; color: #a8a595; }

.formula { height: 18px; display: flex; background: #ece9d8; flex: none; }
.namebox { width: 92px; background: #fff; text-align: center; font: 12px/18px "Liberation Sans", sans-serif; }
.nbdrop { width: 20px; }
.nbdrop i { border: 4px solid transparent; border-top-color: #000; border-bottom: 0; }
.fxb { width: 55px; justify-content: flex-end; padding-right: 3px; font: italic bold 13px/17px "Liberation Serif", serif; }
.formula input { flex: 1; min-width: 0; background: #fff; padding-left: 6px; font: 13px/17px "Liberation Sans", sans-serif; }

.sheet { flex: 1; min-height: 0; display: flex; background: #fff; border-top: 1px solid #85826f; }
.cells { flex: 1; min-width: 0; overflow: hidden; }
table { width: calc(100% + 34px); table-layout: fixed; border-collapse: separate; border-spacing: 0; font: 13px/17px "Liberation Sans", Arial, sans-serif; }
.w-h { width: 26px; } .w-A { width: 64px; } .w-B { width: 27px; } .w-C { width: 98px; } .w-D { width: 104px; }
.w-E { width: 51px; } .w-F { width: 84px; } .w-G { width: 58px; } .w-H { width: 100px; } .w-I { width: 30px; }
.w-J { width: 77px; } .w-K { width: 83px; } .w-L { width: 83px; } .w-M { width: 81px; }
td, th { padding: 0 2px; border-right: 1px solid #000; border-bottom: 1px solid #000; overflow: hidden; white-space: nowrap; }
th { font-weight: 400; background: #efeddc; border-color: #aaa792; text-align: center; padding: 0; }
th.sel { background: #c1d2ee; border-color: #316ac5; }
tbody th { vertical-align: bottom; }
.letters { height: 18px; }
.r1 { height: 17px; line-height: 15px; }
.r2 { height: 53px; }
.data { height: 21px; }
td.plain { border-color: #c6c6c6; }
td.plain.edge { border-right: 2px solid #000; }
td.kb { border-bottom: 2px solid #000; border-right: 2px solid #000; }
td.ub { border-right-color: #c6c6c6; border-bottom: 2px solid #000; }
td.yel { background: #ff0; color: #f00; font-weight: 700; border-right: 0; border-bottom: 2px solid #000; }
td.hd { border-right-width: 2px; border-bottom-width: 2px; text-align: center; white-space: normal; padding: 0 1px; }
.data td { vertical-align: bottom; text-align: right; }
.data .k0 { text-align: center; vertical-align: middle; }
.data .k1 { text-align: left; vertical-align: middle; font: 16px/18px "Liberation Serif", "Times New Roman", serif; }
.data .k2 { text-align: left; vertical-align: middle; }
.data .k3 { border-right-width: 2px; }
.data .k4, .data .k7 { text-align: left; }
.data .k11 { border-right-width: 2px; }
.data .active { box-shadow: inset 0 0 0 1px #000; border-left: 1px solid #fff; padding-left: 1px; }

.vscroll, .dscroll { width: 17px; display: flex; flex-direction: column; flex: none; background: repeating-conic-gradient(#fff 0 25%, #e9e6d6 0 50%) 0 0 / 2px 2px; }
.split { height: 6px; background: #ece9d8; border: 1px solid #fff; border-bottom: 1px solid #000; }
.sb { width: 17px; height: 16px; background: #ece9d8; border: 1px solid #fff; border-right-color: #716f64; border-bottom-color: #716f64; box-shadow: inset -1px -1px #aca899; }
.up { border: 4px solid transparent; border-bottom-color: #000; border-top: 0; }
.down { border: 4px solid transparent; border-top-color: #000; border-bottom: 0; }
.lf { border: 4px solid transparent; border-right-color: #000; border-left: 0; }
.rt { border: 4px solid transparent; border-left-color: #000; border-right: 0; }
.thumb { background: #ece9d8; border: 1px solid #fff; border-right-color: #716f64; border-bottom-color: #716f64; box-shadow: inset -1px -1px #aca899; }
.vscroll .thumb { height: 226px; }

.tabrow { height: 17px; display: flex; background: #ece9d8; flex: none; border-top: 1px solid #aca899; }
.nav { width: 16px; }
.nav svg { width: 16px; height: 16px; }
.tabs { display: flex; width: 557px; overflow: hidden; font-size: 12px; border-bottom: 1px solid #aca899; }
.slant { width: 10px; height: 17px; }
.tab { width: 74px; white-space: nowrap; height: 16px; }
.tab.first { width: 70px; }
.tab.cur { background: #fff; font: bold 12px/14px "Noto Sans", sans-serif; width: 68px; }
.tab.last { justify-content: flex-start; padding-left: 6px; }
.tsplit { width: 6px; border-right: 1px solid #000; border-left: 1px solid #fff; }
.tabrow .sb { width: 15px; }
.hthumb { flex: 1; background: #ece9d8; border: 1px solid #fff; border-right: 2px solid #8a8878; }
.htrack { width: 28px; background: repeating-conic-gradient(#fff 0 25%, #e9e6d6 0 50%) 0 0 / 2px 2px; }
.hend { width: 22px; border-left: 5px solid #ece9d8; box-shadow: inset 1px 0 #000; }

.status { height: 20px; flex: none; display: flex; align-items: center; background: #ece9d8; border-top: 1px solid #fff; padding: 2px 0 0 3px; gap: 2px; }
.ready { flex: 1; }
.status i { height: 15px; border: 1px solid #f5f3e8; border-left-color: #dedbca; border-top-color: #dedbca; }
.p1 { width: 35px; } .p2 { width: 112px; } .p3 { width: 27px; }
.status svg { width: 14px; height: 14px; margin-left: 5px; align-self: flex-end; }

.dialog { position: absolute; left: 273px; top: 149px; width: 405px; background: #0b4be0; padding: 0 3px 3px; border-radius: 7px 7px 0 0; box-shadow: inset 0 0 0 1px #0a2fb4; }
.dialog header { height: 28px; margin: 0 -3px; padding: 2px 5px 0 5px; border-radius: 7px 7px 0 0; display: flex; align-items: center; gap: 2px; background: linear-gradient(#0a4ed0 0, #2f86f8 2px, #0a5ce8 5px, #0355e2 12px, #0664fa 24px, #0450d8 28px); }
.dialog h2 { color: #fff; }
.dbody { display: flex; background: #ece9d8; padding: 7px 6px 5px 6px; }
.form { display: grid; grid-template-columns: 1fr 102px; grid-auto-rows: 20px; row-gap: 6px; flex: 1; align-items: center; padding-bottom: 6px; }
.form label { white-space: nowrap; padding-top: 1px; }
.form input { height: 20px; width: 100%; background: #fff; border: 1px solid #aca899; border-right-color: #fff; border-bottom-color: #fff; box-shadow: inset 1px 1px #333, inset -1px -1px #ece9d8; padding: 0 3px; }
.form output { padding: 1px 0 0 4px; }
.form .marked { background: #000; color: #fff; box-shadow: inset 0 0 0 2px #fff, inset 1px 1px #333; }
.dscroll { margin: 0 14px 0 10px; }
.dscroll .sb { height: 17px; }
.dscroll .thumb { height: 9px; }
.acts { width: 83px; }
.acts p { margin: 1px 0 5px; text-align: center; }
.grp { display: flex; flex-direction: column; gap: 8px; margin-bottom: 12px; }
.grp button { display: block; height: 22px; border: 1px solid #fff; border-right-color: #716f64; border-bottom-color: #716f64; box-shadow: inset -1px -1px #aca899; background: #ece9d8; }
.grp button:disabled { color: #aca899; text-shadow: 1px 1px #fff; }

.lang { position: absolute; left: 836px; top: 458px; width: 116px; height: 26px; display: flex; align-items: center; background: linear-gradient(#3a7af0, #2258d8 4px, #2560e0 22px, #1844b0); color: #fff; padding: 0 5px 0 2px; }
.lgrip { width: 5px; height: 16px; margin-right: 7px; background: repeating-conic-gradient(#0c3496 0 25%, transparent 0 50%) 0 0 / 4px 4px; }
.ru { background: #316ac5; padding: 1px; margin-right: 1px; }
.lang button { margin-left: auto; margin-right: 10px; }
.lang svg { width: 15px; height: 16px; }
.lend { display: flex; flex-direction: column; gap: 7px; }
.lend i { width: 5px; height: 2px; background: #fff; }
.lend .t { width: 0; height: 0; background: none; border: 3px solid transparent; border-top-color: #fff; border-bottom: 0; }

.taskbar { height: 30px; flex: none; display: flex; align-items: center; background: linear-gradient(#1f4fc0 0, #3f8cf3 2px, #2f6ee8 5px, #245edb 10px, #245edb 24px, #1941a5 30px); color: #fff; }
.start { width: 97px; height: 30px; gap: 5px; justify-content: flex-start; padding-left: 10px; border-radius: 0 10px 10px 0; background: linear-gradient(#2f7a2c 0, #65b35f 3px, #3c9a3c 8px, #3a963a 22px, #2a6e2a 30px); box-shadow: inset -3px 0 4px #2a6a3a; }
.start svg { width: 20px; height: 18px; }
.start span { font: italic bold 17px/24px "Open Sans", "Noto Sans", sans-serif; text-shadow: 1px 1px 1px #234; }
.quick { display: flex; width: 102px; padding-left: 12px; gap: 7px; align-items: center; }
.quick svg { width: 16px; height: 16px; }
.chev { font-size: 15px; align-self: flex-start; margin-left: 4px; color: #c4d8fc; }
.task { width: 158px; height: 25px; margin-right: 2px; padding: 0 8px; gap: 5px; justify-content: flex-start; border-radius: 3px; background: linear-gradient(#5a9af8, #3c80f2 4px, #3a7cf0 22px, #2d68d8); white-space: nowrap; overflow: hidden; }
.task svg { width: 16px; height: 16px; }
.task.cur { background: #1c4fb4; box-shadow: inset 1px 1px 2px #123a8c; padding-left: 10px; }
.tray { height: 30px; display: flex; align-items: center; gap: 2px; padding-right: 12px; margin-left: 8px; background: linear-gradient(#1178c8 0, #25b8f8 2px, #149cee 5px, #1090ea 24px, #0c68b8 30px); }
.tray svg { width: 16px; height: 16px; }
.tray .hide { margin-left: -9px; }
.tray .hide svg { width: 18px; height: 18px; }
.tray time { margin-left: 6px; }
</style>
